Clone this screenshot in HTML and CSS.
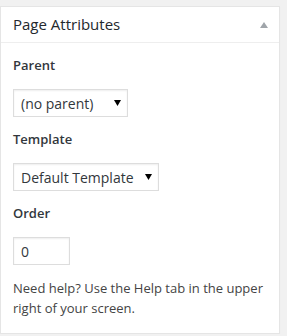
FILE: index.html
```html
<!DOCTYPE html>
<html lang="en">
<head>
    <meta charset="UTF-8">
    <title>Page Attributes</title>
    <link rel="stylesheet" href="styles.css">
</head>
<body>
    <div class="postbox">
        <div class="postbox-header">
            <h2>Page Attributes</h2>
            <span class="toggle-indicator"></span>
        </div>
        <div class="inside">
            <p class="field-label">Parent</p>
            <select class="field-select parent-select" id="parent_id">
                <option>(no parent)</option>
            </select>

            <p class="field-label">Template</p>
            <select class="field-select template-select" id="page_template">
                <option>Default Template</option>
            </select>

            <p class="field-label">Order</p>
            <input type="text" class="field-order" id="menu_order" value="0">

            <p class="help">Need help? Use the Help tab in the upper right of your screen.</p>
        </div>
    </div>
</body>
</html>
```

FILE: styles.css
```css
body {
    margin: 0;
    background-color: #f1f1f1;
    font-family: "Open Sans", sans-serif;
    font-size: 13px;
    color: #444;
}
.postbox {
    margin-top: 6px;
    width: 280px;
    box-sizing: border-box;
    background-color: #fff;
    border: 1px solid #e5e5e5;
    box-shadow: 0 1px 1px rgba(0, 0, 0, 0.04);
}
.postbox-header {
    display: flex;
    align-items: center;
    justify-content: space-between;
    border-bottom: 1px solid #eee;
}
.postbox-header h2 {
    margin: 0;
    padding: 8px 12px;
    font-size: 15px;
    font-weight: 400;
    line-height: 19px;
    color: #23282d;
}
.toggle-indicator {
    width: 0;
    height: 0;
    margin-right: 11px;
    border-left: 4px solid transparent;
    border-right: 4px solid transparent;
    border-bottom: 6px solid #a0a5aa;
}
.inside {
    padding: 0 12px 15px;
}
.field-label {
    margin: 12px 0 14px;
    font-weight: 600;
    line-height: 20px;
    color: #32373c;
}
.field-label + .field-select,
.field-label + .field-order {
    margin-bottom: 1px;
}
.field-select {
    display: block;
    height: 28px;
    padding: 0 20px 0 7px;
    font-family: "Open Sans", sans-serif;
    font-size: 14px;
    color: #32373c;
    background-color: #fff;
    border: 1px solid #ddd;
    border-radius: 0;
    box-shadow: inset 0 1px 2px rgba(0, 0, 0, 0.07);
    -webkit-appearance: none;
    appearance: none;
    background-image: url("data:image/svg+xml,%3Csvg xmlns='http://www.w3.org/2000/svg' width='7' height='6'%3E%3Cpath d='M0 0h7L3.5 6z' fill='%23000'/%3E%3C/svg%3E");
    background-repeat: no-repeat;
    background-position: right 6px center;
}
.parent-select {
    width: 115px;
}
.template-select {
    width: 146px;
}
.field-order {
    display: block;
    width: 57px;
    height: 28px;
    box-sizing: border-box;
    padding: 0 7px;
    font-family: "Open Sans", sans-serif;
    font-size: 14px;
    color: #32373c;
    border: 1px solid #ddd;
    box-shadow: inset 0 1px 2px rgba(0, 0, 0, 0.07);
}
.help {
    margin: 13px 0 0;
    line-height: 20px;
}
```
